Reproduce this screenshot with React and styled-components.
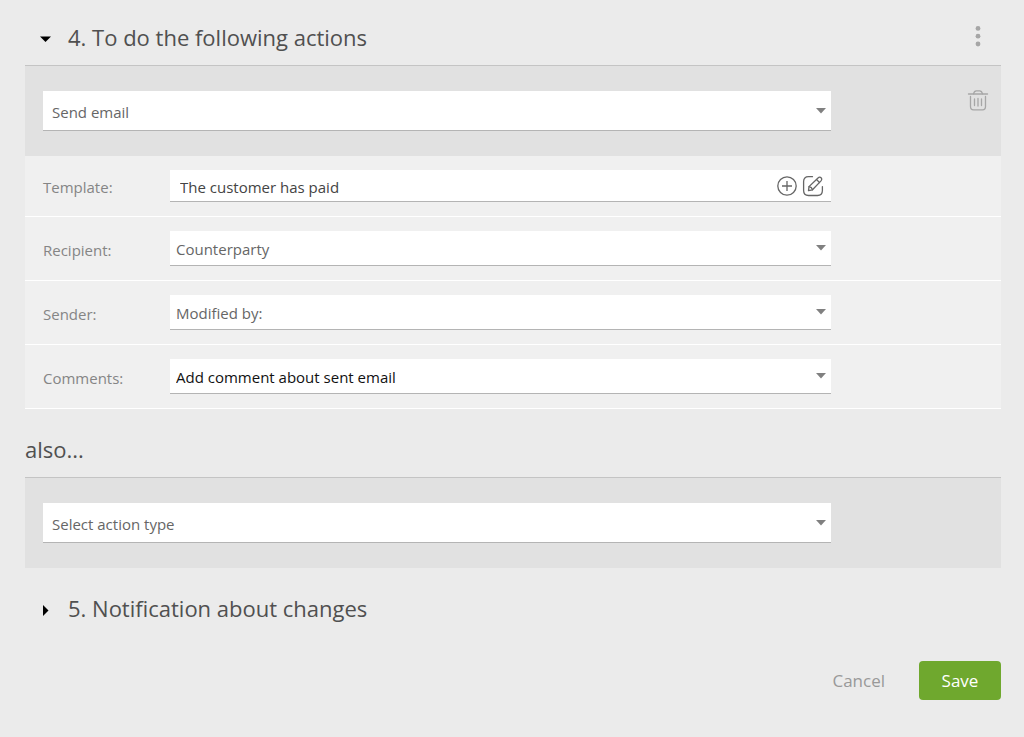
import React, { useState } from 'react'
import styled, { createGlobalStyle } from 'styled-components'

const GlobalStyle = createGlobalStyle`
  * {
    box-sizing: border-box;
  }
  body {
    margin: 0;
    background: #ebebeb;
    color: #505050;
    font-family: 'Open Sans', 'Noto Sans', sans-serif;
    font-size: 15px;
  }
  button,
  input,
  select {
    font-family: inherit;
  }
`

const Page = styled.main`
  padding: 8px 23px 36px 25px;
`

const SectionHeader = styled.header`
  display: flex;
  align-items: center;
  justify-content: space-between;
  height: 57px;
  padding-right: 12px;
`

const Title = styled.h2`
  margin: 0;
  font-size: 22px;
  font-weight: 400;
  line-height: 32px;
`

const Toggle = styled.button`
  display: flex;
  align-items: center;
  gap: 17px;
  padding: 0 0 0 14px;
  border: 0;
  background: none;
  color: inherit;
  font-size: inherit;
  line-height: inherit;
  cursor: pointer;
`

const IconButton = styled.button`
  display: grid;
  place-items: center;
  padding: 0;
  border: 0;
  background: none;
  color: ${(props) => props.$color || '#a6a6a6'};
  cursor: pointer;
`

const ActionBar = styled.div`
  display: grid;
  grid-template-columns: 1fr 170px;
  padding: 25px 0 25px 18px;
  border-top: 1px solid #c4c4c4;
  background: #e1e1e1;
`

const Tools = styled.div`
  display: flex;
  align-items: flex-start;
  justify-content: flex-end;
  padding-right: 12px;
`

const Row = styled.div`
  display: grid;
  grid-template-columns: 127px 1fr;
  align-items: center;
  padding: 14px 170px 14px 18px;
  border-bottom: 1px solid #fff;
  background: #f0f0f0;
`

const Label = styled.label`
  padding-top: 2px;
  color: #858585;
`

const SelectBox = styled.div`
  display: grid;
  align-items: center;
  border-bottom: 1px solid #b4b4b4;
  background: #fff;

  > * {
    grid-area: 1 / 1;
  }
  > svg {
    justify-self: end;
    margin-right: 5px;
    pointer-events: none;
  }
`

const StyledSelect = styled.select`
  appearance: none;
  width: 100%;
  height: ${(props) => (props.$large ? '39px' : '34px')};
  padding: 2px 24px 0 ${(props) => (props.$large ? '9px' : '6px')};
  border: 0;
  border-radius: 0;
  background: transparent;
  color: ${(props) => (props.$dark ? '#111' : '#666')};
  font-size: 15px;
`

const InputBox = styled.div`
  display: flex;
  align-items: center;
  gap: 4px;
  padding-right: 7px;
  border-bottom: 1px solid #b4b4b4;
  background: #fff;
`

const TextInput = styled.input`
  flex: 1;
  min-width: 0;
  height: 31px;
  padding: 3px 10px 0;
  border: 0;
  background: transparent;
  color: #444;
  font-size: 15px;
`

const AlsoTitle = styled(Title)`
  padding: 24px 0 12px;
`

const NextSection = styled.div`
  padding: 24px 0 37px;
`

const Footer = styled.footer`
  display: flex;
  justify-content: flex-end;
  gap: 14px;
`

const Button = styled.button`
  min-width: 82px;
  height: 39px;
  padding: 0 20px;
  border: 0;
  border-radius: 4px;
  background: ${(props) => (props.$primary ? '#6fa82e' : 'transparent')};
  color: ${(props) => (props.$primary ? '#fff' : '#999')};
  font-size: 17px;
  cursor: pointer;
`

const Caret = () => (
  <svg width='10' height='6' viewBox='0 0 10 6' aria-hidden='true'>
    <path d='M0 0h10L5 5.5z' fill='#808080' />
  </svg>
)

const Arrow = ({ open }) => (
  <svg width='12' height='16' viewBox='0 0 12 16' aria-hidden='true'>
    <path d={open ? 'M1 7.500h11L6.500 13z' : 'M4 5v11L9.500 10.500z'} fill='#000' />
  </svg>
)

const Dots = () => (
  <svg width='22' height='22' viewBox='0 0 22 22' fill='currentColor' aria-hidden='true'>
    <circle cx='11' cy='2.4' r='2.4' />
    <circle cx='11' cy='10.2' r='2.4' />
    <circle cx='11' cy='18' r='2.4' />
  </svg>
)

const Trash = () => (
  <svg
    width='22'
    height='22'
    viewBox='0 1 22 22'
    fill='none'
    stroke='currentColor'
    strokeWidth='1.3'
    strokeLinecap='round'
    overflow='visible'
    aria-hidden='true'
  >
    <path d='M1.500 4h19' />
    <path d='M6.500 3.800C7 1.800 7.800 0.800 9.300 0.800h3.400c1.500 0 2.300 1 2.800 3' />
    <path d='M3.500 6.500v10c0 2 1 3.300 3 3.300h9c2 0 3-1.300 3-3.300v-10' />
    <path d='M7.500 9v6.500M11 8.500v7.500M14.500 9v6.500' />
  </svg>
)

const Plus = () => (
  <svg
    width='22'
    height='22'
    viewBox='0 0 22 22'
    fill='none'
    stroke='currentColor'
    strokeWidth='1.3'
    aria-hidden='true'
  >
    <circle cx='11' cy='11' r='9.200' />
    <path d='M11 6v10M6 11h10' />
  </svg>
)

const Edit = () => (
  <svg
    width='22'
    height='22'
    viewBox='0 0 22 22'
    fill='none'
    stroke='currentColor'
    strokeWidth='1.3'
    strokeLinecap='round'
    strokeLinejoin='round'
    aria-hidden='true'
  >
    <path d='M10.500 1.700H6.500c-3.200 0-4.900 1.700-4.900 4.900v9c0 3.200 1.700 4.900 4.900 4.900h9c3.200 0 4.900-1.700 4.900-4.900v-4' />
    <path d='M6.500 15.600l0.500-4L16.300 2.700c0.800-0.800 2-0.700 2.800 0.100 0.800 0.800 0.800 2 0.100 2.800L10.500 14.800z' />
    <path d='M7 11.600c1.500 0.200 3 1.600 3.500 3.200M14.500 4.500l3 3' />
  </svg>
)

const Select = ({ options, ...props }) => (
  <SelectBox>
    <StyledSelect {...props}>
      {options.map((option) => (
        <option key={option}>{option}</option>
      ))}
    </StyledSelect>
    <Caret />
  </SelectBox>
)

const fields = [
  { id: 'recipient', label: 'Recipient:', options: ['Counterparty'] },
  { id: 'sender', label: 'Sender:', options: ['Modified by:'] },
  { id: 'comments', label: 'Comments:', options: ['Add comment about sent email'], dark: true },
]

const App = () => {
  const [actionsOpen, setActionsOpen] = useState(true)
  const [notifyOpen, setNotifyOpen] = useState(false)

  return (
    <Page>
      <GlobalStyle />
      <SectionHeader>
        <Title>
          <Toggle aria-expanded={actionsOpen} onClick={() => setActionsOpen(!actionsOpen)}>
            <Arrow open={actionsOpen} />
            4. To do the following actions
          </Toggle>
        </Title>
        <IconButton aria-label='More'>
          <Dots />
        </IconButton>
      </SectionHeader>

      {actionsOpen && (
        <>
          <ActionBar>
            <Select $large aria-label='Action type' options={['Send email']} />
            <Tools>
              <IconButton aria-label='Delete action'>
                <Trash />
              </IconButton>
            </Tools>
          </ActionBar>
          <Row>
            <Label htmlFor='template'>Template:</Label>
            <InputBox>
              <TextInput id='template' defaultValue='The customer has paid' />
              <IconButton $color='#666' aria-label='Add template'>
                <Plus />
              </IconButton>
              <IconButton $color='#666' aria-label='Edit template'>
                <Edit />
              </IconButton>
            </InputBox>
          </Row>
          {fields.map((field) => (
            <Row key={field.id}>
              <Label htmlFor={field.id}>{field.label}</Label>
              <Select id={field.id} $dark={field.dark} options={field.options} />
            </Row>
          ))}

          <AlsoTitle>also...</AlsoTitle>
          <ActionBar>
            <Select $large aria-label='Next action type' options={['Select action type']} />
          </ActionBar>
        </>
      )}

      <NextSection>
        <Title>
          <Toggle aria-expanded={notifyOpen} onClick={() => setNotifyOpen(!notifyOpen)}>
            <Arrow open={notifyOpen} />
            5. Notification about changes
          </Toggle>
        </Title>
      </NextSection>

      <Footer>
        <Button>Cancel</Button>
        <Button $primary>Save</Button>
      </Footer>
    </Page>
  )
}

export default App
